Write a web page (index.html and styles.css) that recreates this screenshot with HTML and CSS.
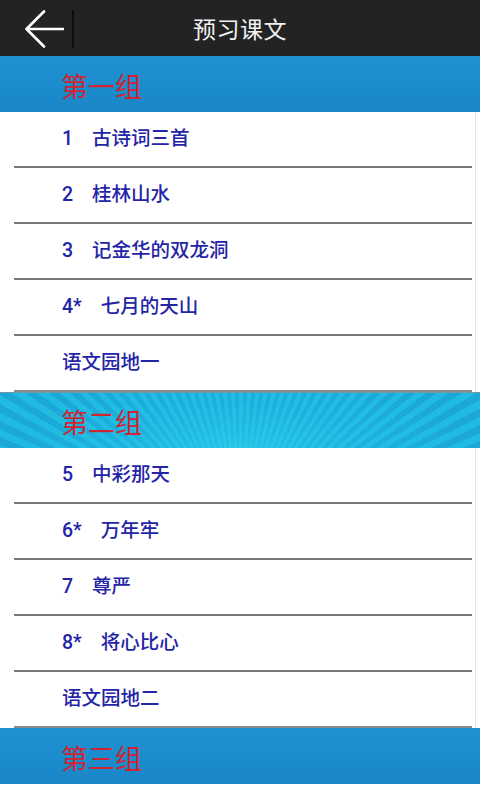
FILE: index.html
```html
<!DOCTYPE html>
<html lang="zh-CN">
<head>
<meta charset="utf-8">
<title>预习课文</title>
<link rel="stylesheet" href="styles.css">
</head>
<body>
<div class="app">
  <header class="topbar">
    <button class="back" aria-label="返回">
      <svg width="40" height="38" viewBox="0 0 40 38">
        <path d="M20 1.5 L2.5 19 L20 36.5 M2.5 19 H39" fill="none" stroke="#fff" stroke-width="2.6" stroke-linecap="round" stroke-linejoin="round"/>
      </svg>
    </button>
    <span class="divider"></span>
    <h1 class="title">预习课文</h1>
    <span class="spacer"></span>
  </header>

  <section class="group">
    <div class="group-head blue">第一组</div>
    <ul class="lessons">
      <li><span class="num">1</span>古诗词三首</li>
      <li><span class="num">2</span>桂林山水</li>
      <li><span class="num">3</span>记金华的双龙洞</li>
      <li><span class="num">4*</span>七月的天山</li>
      <li>语文园地一</li>
    </ul>
  </section>

  <section class="group">
    <div class="group-head rays">第二组</div>
    <ul class="lessons">
      <li><span class="num">5</span>中彩那天</li>
      <li><span class="num">6*</span>万年牢</li>
      <li><span class="num">7</span>尊严</li>
      <li><span class="num">8*</span>将心比心</li>
      <li>语文园地二</li>
    </ul>
  </section>

  <section class="group">
    <div class="group-head blue">第三组</div>
  </section>
</div>
</body>
</html>
```

FILE: styles.css
```css
html, body {
  margin: 0;
  padding: 0;
  background: #ffffff;
}
body {
  font-family: "Noto Sans CJK SC", "Noto Sans", sans-serif;
  width: 480px;
  height: 800px;
  overflow: hidden;
}
.app {
  display: flex;
  flex-direction: column;
  width: 480px;
}
.topbar {
  height: 56px;
  background: #232323;
  display: flex;
  align-items: center;
}
.back {
  width: 72px;
  height: 56px;
  padding: 0 0 0 24px;
  margin: 0;
  border: 0;
  background: transparent;
  display: flex;
  align-items: center;
  justify-content: flex-start;
}
.back svg {
  display: block;
  margin-top: 2px;
}
.divider {
  width: 2px;
  height: 38px;
  margin-top: 2px;
  background: #0c0c0c;
}
.title {
  flex: 1;
  margin: 0;
  text-align: center;
  color: #f2f2f2;
  font-size: 23px;
  font-weight: 400;
  letter-spacing: 0.5px;
}
.spacer {
  width: 74px;
}
.group-head {
  height: 56px;
  display: flex;
  align-items: center;
  padding-left: 61px;
  padding-top: 2px;
  font-size: 27px;
  color: #cf2533;
  box-sizing: border-box;
}
.group-head.blue {
  background: linear-gradient(180deg, #1f91d2 0%, #1b8bcc 60%, #1985c6 100%);
}
.group-head.rays {
  background:
    radial-gradient(ellipse 55% 170% at 50% 110%, rgba(50, 215, 240, 0.6) 0%, rgba(40, 200, 235, 0.3) 45%, rgba(25, 150, 210, 0) 85%),
    repeating-conic-gradient(from -90deg at 50% 260%, #21bbe1 0deg 1.6deg, #1ba8d8 1.6deg 3.2deg),
    #1ea6d8;
  border-top: 1px solid #6f9aa8;
}
.lessons {
  list-style: none;
  margin: 0;
  padding: 0 3px 0 0;
  width: 476px;
  box-sizing: border-box;
  border-right: 1px solid #e6e6e6;
}
.lessons li {
  height: 56px;
  box-sizing: border-box;
  margin-left: 14px;
  padding-left: 48px;
  line-height: 50px;
  border-bottom: 2px solid #777777;
  font-size: 19.5px;
  font-weight: 500;
  color: #2424a6;
  white-space: nowrap;
}
.lessons li:last-child {
  border-bottom-color: #8a8a8a;
}
.num {
  display: inline-block;
  margin-right: 19px;
  font-family: "Roboto", "Noto Sans CJK SC", sans-serif;
}
```
